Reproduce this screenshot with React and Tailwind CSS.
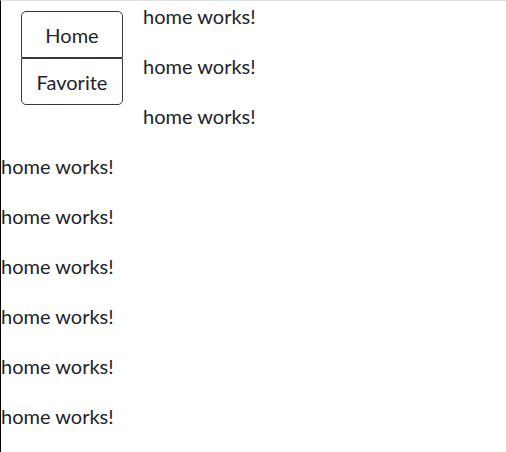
export default function App() {
  const rows = Array.from({ length: 9 });
  return (
    <div
      className="min-h-[452px] border-t border-l border-t-[#dee2e6] border-l-black bg-white text-[#212529] text-[20px] leading-[30px]"
      style={{ fontFamily: 'Lato, "Liberation Sans", sans-serif' }}
    >
      <div className="float-left mt-[10px] ml-[20px] mr-[20px] mb-[10px] flex flex-col w-[102px]">
        <button className="h-[47px] border border-[#343a40] rounded-t-[5px] text-[#212529] text-[20px] leading-[30px] bg-white">
          Home
        </button>
        <button className="h-[47px] border border-[#343a40] rounded-b-[5px] text-[#212529] text-[20px] leading-[30px] bg-white">
          Favorite
        </button>
      </div>
      {rows.map((_, i) => (
        <p key={i} className="mb-[20px]">
          home works!
        </p>
      ))}
    </div>
  );
}
